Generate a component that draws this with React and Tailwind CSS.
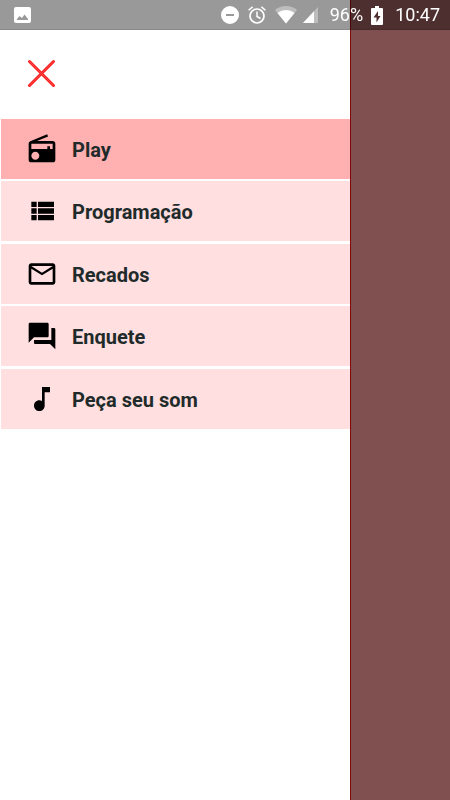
import React, { useState } from "react";
import { MdRadio, MdMailOutline, MdForum, MdMusicNote } from "react-icons/md";

function ListIcon(props) {
  return (
    <svg viewBox="0 0 24 24" fill="currentColor" {...props}>
      <path d="M4 14h4v-4H4v4zm0 5h4v-4H4v4zM4 9h4V5H4v4zm5 5h12v-4H9v4zm0 5h12v-4H9v4zM9 5v4h12V5H9z" />
    </svg>
  );
}

const menuItems = [
  { id: "play", label: "Play", Icon: MdRadio },
  { id: "programacao", label: "Programação", Icon: ListIcon },
  { id: "recados", label: "Recados", Icon: MdMailOutline },
  { id: "enquete", label: "Enquete", Icon: MdForum },
  { id: "som", label: "Peça seu som", Icon: MdMusicNote },
];

function StatusBar() {
  return (
    <header className="fixed inset-x-0 top-0 z-10 flex h-[30px] items-center border-b border-black/10 bg-black/40 pl-3.5 pr-2.5 pt-px text-lg text-white">
      <svg className="h-4 w-[17px]" viewBox="0 0 17 16" aria-hidden="true">
        <path
          fill="white"
          fillRule="evenodd"
          d="M2 0h13a2 2 0 0 1 2 2v12a2 2 0 0 1-2 2H2a2 2 0 0 1-2-2V2a2 2 0 0 1 2-2zM3 13h11v-1l-3.500-4.500L8 11 5.500 9 3 12z"
        />
      </svg>

      <div className="ml-auto flex items-center gap-[9px]">
        <svg className="size-[18px]" viewBox="0 0 18 18" aria-hidden="true">
          <path fill="white" fillRule="evenodd" d="M9 0a9 9 0 1 0 0 18A9 9 0 0 0 9 0zM5 8h8v2H5z" />
        </svg>
        <svg className="size-[18px]" viewBox="0 0 18 18" fill="none" stroke="white" aria-hidden="true">
          <circle cx="9" cy="10" r="7" strokeWidth="1.700" />
          <path strokeWidth="1.500" d="M9 5.500v5l3.500 2M.6 4.300 4.600.9M17.400 4.300 13.400.9" />
        </svg>
        <svg className="h-[18px] w-[22px]" viewBox="0 0 22 18" fill="white" aria-hidden="true">
          <path opacity=".35" d="M11 17.500 0 4C3 1.500 7 0 11 0S19 1.500 22 4z" />
          <path d="M11 17.500 2.500 7C5 5 8 4 11 4s6 1 8.500 3z" />
        </svg>
      </div>
      <svg className="ml-1.5 h-4 w-[15px]" viewBox="0 0 15 16" fill="white" aria-hidden="true">
        <path opacity=".35" d="M15 0v16H0z" />
        <path d="M11 4.300V16H0z" />
      </svg>
      <span className="ml-3">96%</span>
      <svg className="ml-2 h-[19px] w-3" viewBox="0 0 12 19" aria-hidden="true">
        <path
          fill="white"
          fillRule="evenodd"
          d="M4 0h4v2h3a1 1 0 0 1 1 1v15a1 1 0 0 1-1 1H1a1 1 0 0 1-1-1V3a1 1 0 0 1 1-1h3zM7 5 2.500 11.500H5.500V16.500L9.500 10H7z"
        />
      </svg>
      <time className="ml-3">10:47</time>
    </header>
  );
}

function App() {
  const [active, setActive] = useState("play");

  return (
    <div className="flex min-h-screen bg-white font-['Roboto',sans-serif]">
      <StatusBar />
      <aside className="flex-1 pt-[51px]">
        <button type="button" aria-label="Fechar menu" className="ml-[19px] block cursor-pointer p-2">
          <svg className="size-[30px]" viewBox="0 0 30 30" fill="none" strokeLinecap="round" aria-hidden="true">
            <path stroke="#fa1e1e" strokeWidth="3" d="M2.500 2.500 26.500 26.500M26.500 2.500 2.500 26.500" />
            <path stroke="#ff4646" strokeWidth="1" d="M2.500 2.500 26.500 26.500M26.500 2.500 2.500 26.500" />
          </svg>
        </button>
        <nav className="mt-[22px] pl-px">
          <ul>
            {menuItems.map(({ id, label, Icon }) => (
              <li key={id} className="odd:mb-[2px] even:mb-[3px]">
                <button
                  type="button"
                  onClick={() => setActive(id)}
                  className={`flex h-15 w-full cursor-pointer items-center gap-3.5 pl-[25px] text-xl font-bold text-[#1f2b2b] ${
                    active === id ? "bg-[#ffb0b0]" : "bg-[#ffdfdf]"
                  }`}
                >
                  <Icon className="size-8 text-black" aria-hidden="true" />
                  <span className="pt-0.5">{label}</span>
                </button>
              </li>
            ))}
          </ul>
        </nav>
      </aside>
      <div className="w-[100px] border-l border-[#800808] bg-[#804f4f]" />
    </div>
  );
}

export default App;
